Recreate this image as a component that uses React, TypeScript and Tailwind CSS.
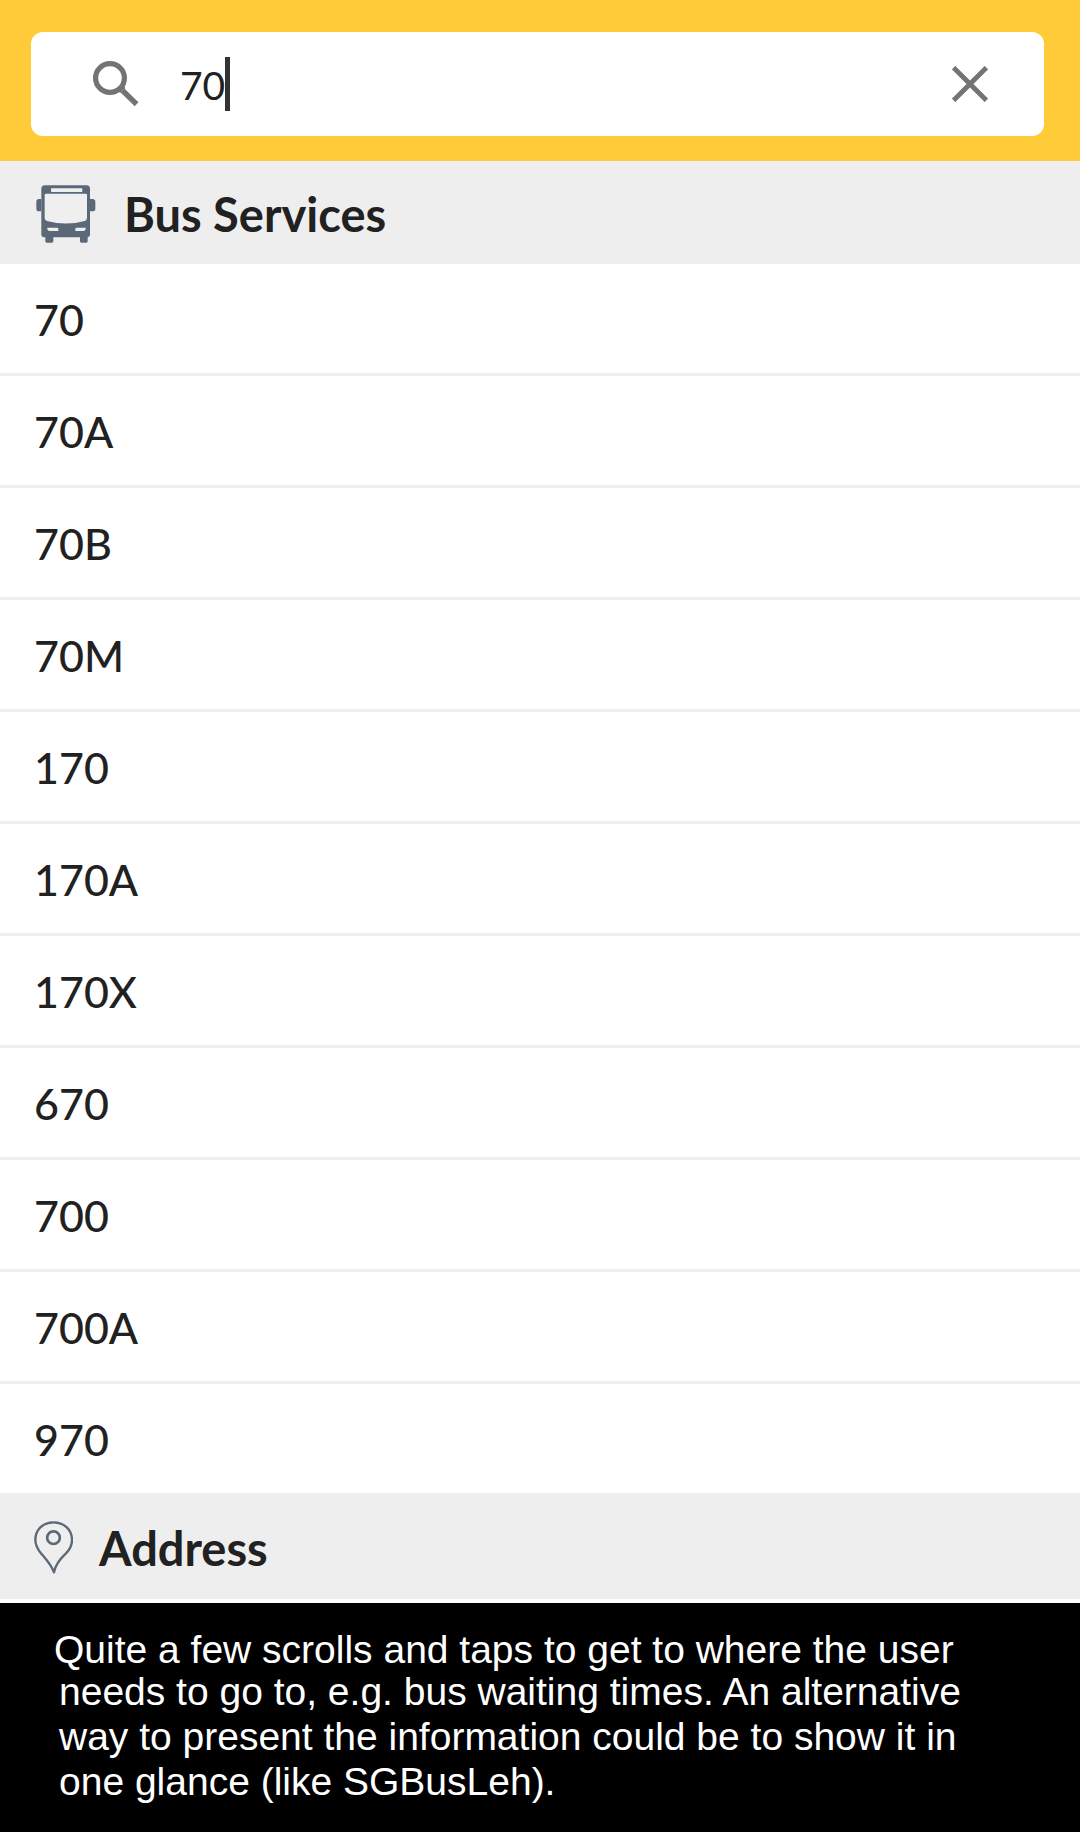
import { useState } from "react";

const services = ["70", "70A", "70B", "70M", "170", "170A", "170X", "670", "700", "700A", "970"];

function SearchIcon() {
  return (
    <svg className="h-[46px] w-[46px] shrink-0" viewBox="0 0 46 46" fill="none" stroke="#747474" aria-hidden="true">
      <circle cx="17" cy="17" r="14.4" strokeWidth="5.2" />
      <path d="M29.5 29.5 43.6 43.3" strokeWidth="5.4" />
      <path d="M27.5 31.5v-3l1.5-1.5h3" strokeWidth="2" fill="#747474" />
    </svg>
  );
}

function CloseIcon() {
  return (
    <svg className="h-9 w-9" viewBox="0 0 36 36" fill="none" stroke="#747474" strokeWidth="4.8" aria-hidden="true">
      <path d="M1.6 1.6 34.4 34.4M34.4 1.6 1.6 34.4" />
    </svg>
  );
}

function BusIcon() {
  return (
    <svg className="h-[58px] w-[60px] shrink-0" viewBox="0 0 180 174" aria-hidden="true">
      <g fill="#5b6878">
        <path d="M26 1H152Q162 1 162 12V148Q162 157 153 157H25Q16 157 16 148V12Q16 1 26 1Z" />
        <path d="M16 42V79H9Q1 79 1 71V50Q1 42 9 42ZM162 42V79H169Q178 79 178 71V50Q178 42 169 42Z" />
        <path d="M28 155H52V169Q52 173 48 173H32Q28 173 28 169ZM132 155H155V169Q155 173 151 173H136Q132 173 132 169Z" />
      </g>
      <g fill="#efefef">
        <rect x="45" y="10" width="94" height="11" rx="2" />
        <path d="M30 26H149Q153 26 153 30V98Q153 106 146 108Q90 123 33 108Q26 106 26 99V30Q26 26 30 26Z" />
        <path d="M34 128H64Q67 128 67 131V138H40Q36 138 34 133ZM121 128H149V133Q147 138 143 138H118V131Q118 128 121 128Z" />
      </g>
    </svg>
  );
}

function PinIcon() {
  return (
    <svg className="h-[53px] w-[39px] shrink-0" viewBox="0 0 117 159" fill="none" stroke="#5b6878" aria-hidden="true">
      <path
        d="M58.5 4C26 4 4 27 4 56C4 73 11 85 22 98C39 118 53 133 60 154C64 132 76 116 95 98C108 85 114 73 114 57C114 27 91 4 58.5 4Z"
        strokeWidth="7"
        strokeLinejoin="round"
      />
      <circle cx="58.5" cy="50" r="19" strokeWidth="8" />
    </svg>
  );
}

export default function App() {
  const [query, setQuery] = useState("70");

  return (
    <div className="bg-white font-['Lato',sans-serif] text-[#212121]">
      <header className="bg-[#ffcb39] pt-8 pr-9 pb-[25px] pl-[31px]">
        <form role="search" className="flex h-[104px] items-center rounded-xl bg-white pr-14 pl-[62px]">
          <SearchIcon />
          <div className="ml-[41px] flex min-w-0 flex-1 items-center">
            <input
              type="text"
              aria-label="Search"
              value={query}
              onChange={(e) => setQuery(e.target.value)}
              className="max-w-full pt-0.5 [field-sizing:content] text-[39px] leading-[54px] caret-transparent outline-none"
            />
            <span className="h-[54px] w-[5px] shrink-0 bg-[#333333]" />
          </div>
          <button type="button" aria-label="Clear search" onClick={() => setQuery("")}>
            <CloseIcon />
          </button>
        </form>
      </header>

      <main>
        <section>
          <h2 className="flex h-[103px] items-center gap-7 bg-[#eeeeee] px-9 pt-0.5 text-[47px] font-bold">
            <BusIcon />
            <span className="pt-0.5">Bus Services</span>
          </h2>
          <ul className="divide-y-[3px] divide-[#eeeeee]">
            {services.map((name) => (
              <li key={name}>
                <button type="button" className="flex h-[109px] w-full items-center px-[34px] pt-1 text-left text-[43px] font-medium">
                  {name}
                </button>
              </li>
            ))}
          </ul>
        </section>

        <section className="border-b-4 border-white">
          <h2 className="flex h-[106px] items-center gap-[26px] bg-[#eeeeee] px-[34px] pt-0.5 text-[47px] font-bold">
            <PinIcon />
            <span className="pt-0.5">Address</span>
          </h2>
        </section>
      </main>

      <footer className="bg-black px-[54px] pt-[27px] pb-7 font-['Liberation_Sans',sans-serif] text-[39px] leading-[45px] text-white">
        <p className="leading-[39px]">Quite a few scrolls and taps to get to where the user</p>
        <p className="pl-[5px]">
          needs to go to, e.g. bus waiting times. An alternative
          <br />
          way to present the information could be to show it in
          <br />
          one glance (like SGBusLeh).
        </p>
      </footer>
    </div>
  );
}
